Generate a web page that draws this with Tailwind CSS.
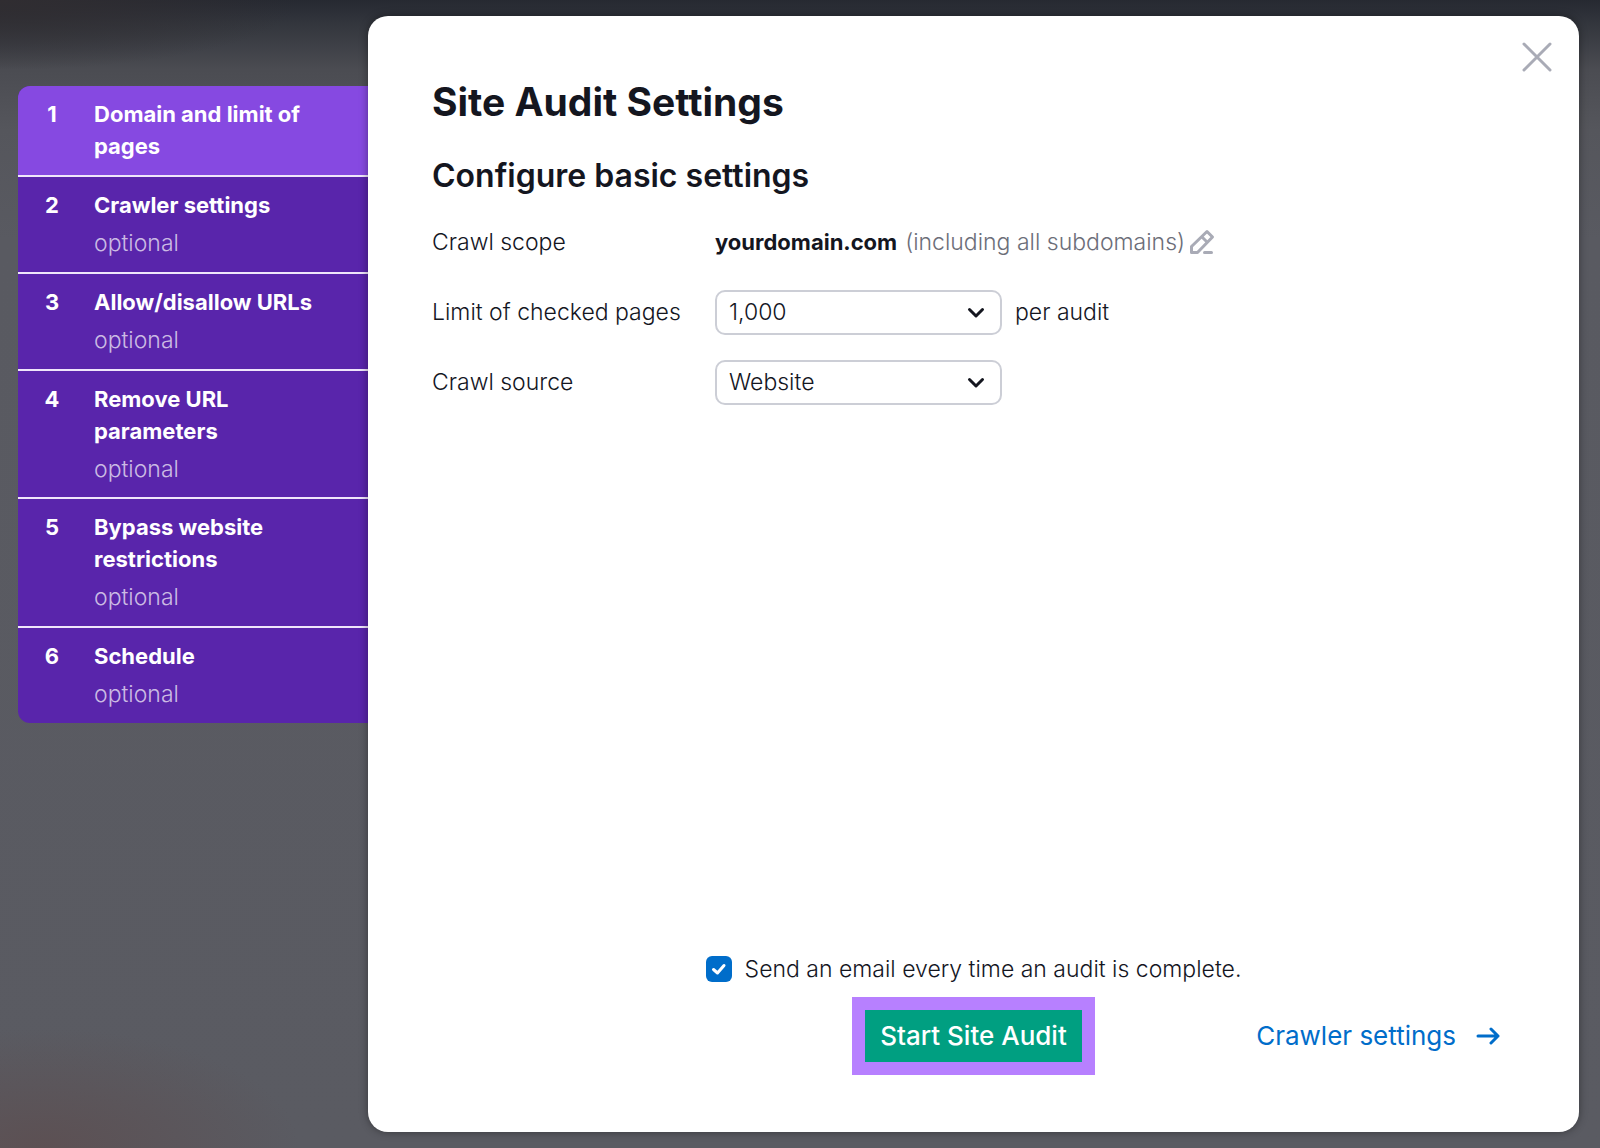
<!DOCTYPE html>
<html lang="en">

<head>
  <meta charset="utf-8"/>
  <meta content="width=device-width, initial-scale=1.0" name="viewport"/>
  <title>Site Audit Settings</title>
  <script src="https://cdn.jsdelivr.net/npm/@tailwindcss/browser@4"></script>
</head>

<body class="min-h-screen flex items-stretch pt-4 pb-4 pl-[18px] pr-[21px] font-['Inter',sans-serif] text-[23px] leading-8 text-[#14161f] bg-[#595a61] bg-[radial-gradient(ellipse_260px_120px_at_40px_100%,#5c5053,transparent),radial-gradient(ellipse_300px_70px_at_0px_0px,#302d31,transparent),linear-gradient(to_bottom,#262931_0px,#33363d_24px,#4b4c52_70px,#55565c_130px,#595a61_240px,#5a5b62_100%)]">

<!-- Steps -->
<nav class="w-[350px] shrink-0 mt-[70px] text-[22px] font-bold text-white" aria-label="Settings steps">
  <ol class="rounded-l-xl overflow-hidden divide-y-2 divide-[#efe6fb] bg-[#5925ab]">
    <li class="bg-[#8649e1]">
      <a href="#domain" class="flex pt-3 pb-[13px] pr-10" aria-current="step">
        <span class="w-[68px] text-center">1</span>
        <span class="flex-1 ml-2">Domain and limit of pages</span>
      </a>
    </li>
    <li>
      <a href="#crawler" class="flex pt-3 pb-[13px] pr-10">
        <span class="w-[68px] text-center">2</span>
        <span class="flex-1 ml-2">Crawler settings
          <span class="block mt-[6px] text-[23px] font-light text-white/70">optional</span>
        </span>
      </a>
    </li>
    <li>
      <a href="#urls" class="flex pt-3 pb-[13px] pr-10">
        <span class="w-[68px] text-center">3</span>
        <span class="flex-1 ml-2">Allow/disallow URLs
          <span class="block mt-[6px] text-[23px] font-light text-white/70">optional</span>
        </span>
      </a>
    </li>
    <li>
      <a href="#parameters" class="flex pt-3 pb-3 pr-10">
        <span class="w-[68px] text-center">4</span>
        <span class="flex-1 ml-2">Remove URL<br/>parameters
          <span class="block mt-[6px] text-[23px] font-light text-white/70">optional</span>
        </span>
      </a>
    </li>
    <li>
      <a href="#restrictions" class="flex pt-3 pb-[13px] pr-10">
        <span class="w-[68px] text-center">5</span>
        <span class="flex-1 ml-2">Bypass website<br/>restrictions
          <span class="block mt-[6px] text-[23px] font-light text-white/70">optional</span>
        </span>
      </a>
    </li>
    <li>
      <a href="#schedule" class="flex pt-3 pb-[13px] pr-10">
        <span class="w-[68px] text-center">6</span>
        <span class="flex-1 ml-2">Schedule
          <span class="block mt-[6px] text-[23px] font-light text-white/70">optional</span>
        </span>
      </a>
    </li>
  </ol>
</nav>

<!-- Settings dialog -->
<main class="relative flex-1 flex flex-col px-16 pt-[62px] pb-[57px] bg-white rounded-[20px] shadow-[0_0_8px_rgba(0,0,0,0.4)]">

  <button class="absolute top-[23px] right-6 p-[3px]" type="button" aria-label="Close">
    <svg class="w-[30px] h-[30px]" viewBox="0 0 30 30" fill="none" stroke="#a9abb6" stroke-width="3" stroke-linecap="round">
      <path d="M2 2 28 28M28 2 2 28"/>
    </svg>
  </button>

  <h1 class="text-[39px] leading-12 font-bold">Site Audit Settings</h1>
  <h2 class="mt-[30px] text-[32px] leading-10 font-semibold">Configure basic settings</h2>

  <form class="flex-1 flex flex-col font-light" id="audit-form">
    <div class="mt-6 grid grid-cols-[283px_1fr] auto-rows-[44px] gap-y-[26px] items-center">

      <div>Crawl scope</div>
      <div class="flex items-center">
        <strong class="text-[22px] font-bold">yourdomain.com</strong>
        <span class="ml-2 text-[#6c6e79]">(including all subdomains)</span>
        <button class="ml-1" type="button" aria-label="Edit crawl scope">
          <svg class="w-[26px] h-[26px]" viewBox="0 0 26 26" fill="none" stroke="#a9abb6" stroke-width="3" stroke-linejoin="round">
            <path d="M2.5 23.5V17.5L18 2.5 23.5 8 8.5 23.5Z"/>
            <path d="M12.5 7.5 18.5 13.5"/>
            <path d="M15.5 23.5H22.5" stroke-linecap="round"/>
          </svg>
        </button>
      </div>

      <label for="page-limit">Limit of checked pages</label>
      <div class="flex items-center gap-[13px]">
        <div class="relative w-[287px]">
          <select class="appearance-none w-full h-[45px] pl-3 pr-12 bg-white border-2 border-[#ccced6] rounded-[10px]" id="page-limit">
            <option>1,000</option>
          </select>
          <svg class="absolute right-[17px] top-[17px] w-[18px] h-3 pointer-events-none" viewBox="0 0 18 12" fill="none" stroke="#14161f" stroke-width="3" stroke-linecap="round" stroke-linejoin="round">
            <path d="M2.5 2.5 9 9 15.5 2.5"/>
          </svg>
        </div>
        <span>per audit</span>
      </div>

      <label for="crawl-source">Crawl source</label>
      <div class="relative w-[287px]">
        <select class="appearance-none w-full h-[45px] pl-3 pr-12 bg-white border-2 border-[#ccced6] rounded-[10px]" id="crawl-source">
          <option>Website</option>
        </select>
        <svg class="absolute right-[17px] top-[17px] w-[18px] h-3 pointer-events-none" viewBox="0 0 18 12" fill="none" stroke="#14161f" stroke-width="3" stroke-linecap="round" stroke-linejoin="round">
          <path d="M2.5 2.5 9 9 15.5 2.5"/>
        </svg>
      </div>
    </div>

    <!-- Footer -->
    <div class="mt-auto flex flex-col items-center">
      <div class="flex items-center gap-[13px]">
        <span class="relative block w-[26px] h-[26px]">
          <input class="appearance-none block w-full h-full rounded-md bg-[#006dca]" id="send-email" type="checkbox" checked/>
          <svg class="absolute inset-0 pointer-events-none" viewBox="0 0 26 26" fill="none" stroke="#fff" stroke-width="3" stroke-linecap="round" stroke-linejoin="round">
            <path d="M7.5 13.5 11.5 17 18 9.5"/>
          </svg>
        </span>
        <label for="send-email">Send an email every time an audit is complete.</label>
      </div>

      <div class="mt-3 w-full grid grid-cols-[1fr_auto_1fr] items-center text-[26px]">
        <button class="col-start-2 h-[78px] px-[15px] border-[13px] border-[#b780ff] bg-[#009f81] font-medium text-white" type="submit">Start Site Audit</button>
        <a href="#crawler" class="justify-self-end mr-[15px] flex items-center gap-5 font-normal text-[#006dca]">
          Crawler settings
          <svg class="w-6 h-[18px]" viewBox="0 0 24 18" fill="none" stroke="currentColor" stroke-width="3" stroke-linecap="round" stroke-linejoin="round">
            <path d="M2 9H22M15 2 22 9 15 16"/>
          </svg>
        </a>
      </div>
    </div>
  </form>
</main>

</body>
</html>
